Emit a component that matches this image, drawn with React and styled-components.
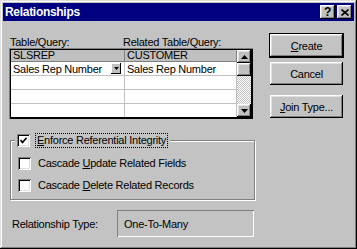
import React from "react";
import styled, { createGlobalStyle, css } from "styled-components";

const GlobalStyle = createGlobalStyle`
  * { box-sizing: border-box; }
  html, body { margin: 0; padding: 0; background: #c3c3c3; }
  body {
    font-family: "Liberation Sans", Arial, sans-serif;
    font-size: 11px;
    letter-spacing: -0.25px;
    color: #000;
  }
`;

const raised = css`
  box-shadow: inset -1px -1px #000, inset 1px 1px #fff, inset -2px -2px #808080,
    inset 2px 2px #dfdfdf;
`;

function App() {
  return (
    <>
      <GlobalStyle />
      <Window>
        <TitleBar>
          <Title>Relationships</Title>
          <TitleButtons>
            <TitleBtn>?</TitleBtn>
            <TitleBtn>
              <svg width="8" height="7" viewBox="0 0 8 7">
                <path d="M0.5 0.5 L7.5 6.5 M7.5 0.5 L0.5 6.5" stroke="#000" strokeWidth="1.6" />
              </svg>
            </TitleBtn>
          </TitleButtons>
        </TitleBar>

        <Body>
          <LeftCol>
            <LabelRow>
              <ColLabel $first>Table/Query:</ColLabel>
              <ColLabel>Related Table/Query:</ColLabel>
            </LabelRow>

            <Grid>
              <Sheet>
                <HeadRow>
                  <HeadCell $first>SLSREP</HeadCell>
                  <HeadCell>CUSTOMER</HeadCell>
                </HeadRow>
                <DataRow>
                  <Cell $first>
                    Sales Rep Number
                    <DropBtn>
                      <svg width="5" height="3" viewBox="0 0 5 3">
                        <path d="M0 0 H5 L2.5 3 Z" fill="#000" />
                      </svg>
                    </DropBtn>
                  </Cell>
                  <Cell>Sales Rep Number</Cell>
                </DataRow>
                {[0, 1, 2].map((i) => (
                  <DataRow key={i}>
                    <Cell $first />
                    <Cell />
                  </DataRow>
                ))}
              </Sheet>
              <ScrollBar>
                <ScrollBtn>
                  <svg width="7" height="4" viewBox="0 0 7 4">
                    <path d="M3.5 0 L7 4 H0 Z" fill="#000" />
                  </svg>
                </ScrollBtn>
                <ScrollBtn />
                <Track />
                <ScrollBtn>
                  <svg width="7" height="4" viewBox="0 0 7 4">
                    <path d="M0 0 H7 L3.5 4 Z" fill="#000" />
                  </svg>
                </ScrollBtn>
              </ScrollBar>
            </Grid>

            <Group>
              <Legend>
                <CheckRow>
                  <Box>
                    <svg width="7" height="7" viewBox="0 0 7 7">
                      <path d="M0.5 3 L2.5 5.5 L6.5 0.8" stroke="#000" strokeWidth="1.6" fill="none" />
                    </svg>
                  </Box>
                  <CheckText $focused>
                    <u>E</u>nforce Referential Integrity
                  </CheckText>
                </CheckRow>
              </Legend>
              <CheckRow>
                <Box />
                <CheckText>
                  Cascade <u>U</u>pdate Related Fields
                </CheckText>
              </CheckRow>
              <CheckRow>
                <Box />
                <CheckText>
                  Cascade <u>D</u>elete Related Records
                </CheckText>
              </CheckRow>
            </Group>

            <TypeRow>
              <TypeLabel>Relationship Type:</TypeLabel>
              <TypeBox>One-To-Many</TypeBox>
            </TypeRow>
          </LeftCol>

          <RightCol>
            <Button $default>
              <u>C</u>reate
            </Button>
            <Button>Cancel</Button>
            <Button $gap>
              <u>J</u>oin Type...
            </Button>
          </RightCol>
        </Body>
      </Window>
    </>
  );
}

export default App;

const Window = styled.div`
  width: 357px;
  height: 249px;
  padding: 3px;
  background: #c3c3c3;
  box-shadow: inset -1px -1px #000, inset 1px 1px #dfdfdf, inset -2px -2px #808080,
    inset 2px 2px #fff;
`;

const TitleBar = styled.div`
  display: flex;
  align-items: center;
  justify-content: space-between;
  height: 18px;
  padding: 0 2px 0 2px;
  background: #000080;
`;

const Title = styled.span`
  color: #fff;
  font-weight: bold;
  font-size: 12px;
  letter-spacing: -0.3px;
`;

const TitleButtons = styled.div`
  display: flex;
  gap: 2px;
`;

const TitleBtn = styled.div`
  width: 15px;
  height: 14px;
  display: flex;
  align-items: center;
  justify-content: center;
  background: #c0c0c0;
  font-weight: bold;
  font-size: 12px;
  line-height: 1;
  ${raised}
`;

const Body = styled.div`
  display: flex;
  gap: 14px;
  padding: 12px 0 0 6px;
`;

const LeftCol = styled.div`
  width: 246px;
  margin-top: 2px;
  display: flex;
  flex-direction: column;
`;

const LabelRow = styled.div`
  display: flex;
  height: 13px;
  line-height: 14px;
`;

const ColLabel = styled.span`
  width: ${(p) => (p.$first ? "114px" : "auto")};
  padding-left: ${(p) => (p.$first ? "1px" : "0")};
`;

const Grid = styled.div`
  display: flex;
  width: 244px;
  height: 71px;
  padding: 2px;
  background: #fff;
  box-shadow: inset 1px 1px #808080, inset 2px 2px #000, inset -2px -2px #000;
`;

const Sheet = styled.div`
  flex: 1;
  display: flex;
  flex-direction: column;
  overflow: hidden;
`;

const HeadRow = styled.div`
  display: flex;
  height: 12px;
  flex: none;
  background: #c0c0c0;
  border-bottom: 1px solid #808080;
`;

const HeadCell = styled.div`
  width: ${(p) => (p.$first ? "114px" : "auto")};
  flex: ${(p) => (p.$first ? "none" : "1")};
  padding-left: 2px;
  line-height: 11px;
  border-right: 1px solid #808080;
`;

const DataRow = styled.div`
  display: flex;
  height: 14px;
  flex: none;
  border-bottom: 1px solid #c0c0c0;
`;

const Cell = styled.div`
  width: ${(p) => (p.$first ? "114px" : "auto")};
  flex: ${(p) => (p.$first ? "none" : "1")};
  display: flex;
  align-items: center;
  padding-left: 2px;
  border-right: 1px solid #c0c0c0;
  white-space: nowrap;
`;

const DropBtn = styled.div`
  width: 10px;
  height: 11px;
  margin-left: auto;
  margin-right: 3px;
  display: flex;
  align-items: center;
  justify-content: center;
  background: #c0c0c0;
  box-shadow: inset -1px -1px #000, inset 1px 1px #fff;
`;

const ScrollBar = styled.div`
  width: 14px;
  display: flex;
  flex-direction: column;
  background-color: #fff;
  background-image: conic-gradient(#c0c0c0 25%, #fff 0 50%, #c0c0c0 0 75%, #fff 0);
  background-size: 2px 2px;
`;

const ScrollBtn = styled.div`
  height: 13px;
  flex: none;
  display: flex;
  align-items: center;
  justify-content: center;
  background: #c0c0c0;
  ${raised}
`;

const Track = styled.div`
  flex: 1;
`;

const Group = styled.fieldset`
  width: 245px;
  margin: 15px 0 0 1px;
  padding: 10px 7px 7px 7px;
  border: 1px solid #808080;
  box-shadow: inset 1px 1px #fff, 1px 1px #fff;
  display: flex;
  flex-direction: column;
  gap: 9px;
`;

const Legend = styled.legend`
  margin-left: -3px;
  padding: 0 2px;
  background: #c3c3c3;
`;

const CheckRow = styled.div`
  display: flex;
  align-items: center;
  gap: 5px;
  height: 13px;
`;

const Box = styled.div`
  width: 13px;
  height: 13px;
  flex: none;
  display: flex;
  align-items: center;
  justify-content: center;
  background: #fff;
  box-shadow: inset 1px 1px #808080, inset -1px -1px #fff, inset 2px 2px #000,
    inset -2px -2px #dfdfdf;
`;

const CheckText = styled.span`
  padding: 0 1px;
  line-height: 13px;
  white-space: nowrap;
  border: 1px dotted ${(p) => (p.$focused ? "#000" : "transparent")};
`;

const TypeRow = styled.div`
  display: flex;
  align-items: center;
  margin-top: 10px;
`;

const TypeLabel = styled.span`
  width: 108px;
  padding-left: 3px;
`;

const TypeBox = styled.div`
  width: 137px;
  height: 27px;
  display: flex;
  align-items: center;
  padding-left: 7px;
  box-shadow: inset 1px 1px #808080, inset -1px -1px #fff;
`;

const RightCol = styled.div`
  display: flex;
  flex-direction: column;
  align-items: center;
  width: 75px;
`;

const Button = styled.div`
  width: ${(p) => (p.$default ? "75px" : "73px")};
  height: ${(p) => (p.$default ? "25px" : "23px")};
  margin-top: ${(p) => (p.$default ? "0" : p.$gap ? "10px" : "4px")};
  display: flex;
  align-items: center;
  justify-content: center;
  background: #c3c3c3;
  ${(p) =>
    p.$default
      ? css`
          box-shadow: inset 0 0 0 1px #000, inset -2px -2px #000, inset 2px 2px #fff,
            inset -3px -3px #808080, inset 3px 3px #dfdfdf;
        `
      : raised}
`;
